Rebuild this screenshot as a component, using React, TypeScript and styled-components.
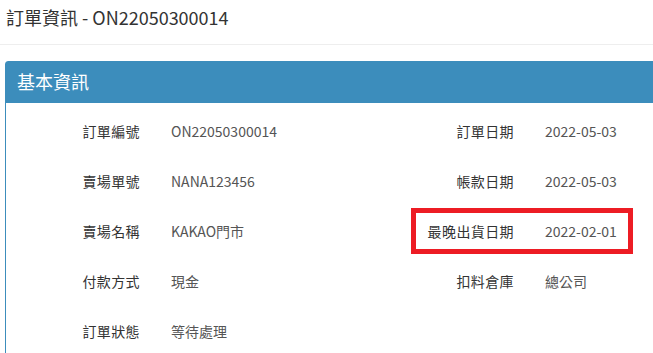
import React from "react";
import styled, { createGlobalStyle } from "styled-components";

const Global = createGlobalStyle`
  html, body { margin: 0; padding: 0; background: #fff; overflow: hidden; }
  body { font-family: "Noto Sans CJK TC", "Noto Sans", sans-serif; color: #333; }
`;

const Page = styled.div`
  width: 760px;
`;

const TitleBar = styled.div`
  height: 44px;
  border-bottom: 1px solid #eee;
  padding-left: 6px;
  display: flex;
  align-items: flex-start;
`;

const Title = styled.h1`
  margin: 5px 0 0;
  font-size: 18px;
  font-weight: 400;
  line-height: 24px;
  color: #333;
`;

const Panel = styled.section`
  margin: 16px 0 0 5px;
  border: 1px solid #3c8dbc;
  border-radius: 3px 3px 0 0;
  width: 750px;
`;

const PanelHeading = styled.div`
  background: #3c8dbc;
  color: #fff;
  height: 41px;
  padding: 0 0 0 11px;
  display: flex;
  align-items: center;
  font-size: 18px;
  line-height: 24px;
  padding-bottom: 4px;
  box-sizing: border-box;
`;

const PanelBody = styled.div`
  padding-top: 3px;
  display: grid;
  grid-template-columns: 374px 374px;
  align-items: start;
`;

const Column = styled.div`
  display: flex;
  flex-direction: column;
`;

const Field = styled.div`
  position: relative;
  height: 50px;
  display: grid;
  grid-template-columns: 134px 1fr;
  column-gap: 31px;
  align-items: center;
  font-size: 14px;
`;

const Label = styled.div`
  text-align: right;
  color: #333;
  letter-spacing: 0.4px;
`;

const Value = styled.div`
  color: #555;
`;

const Highlight = styled.div`
  position: absolute;
  left: 31px;
  top: 2px;
  width: 222px;
  height: 46px;
  border: 5px solid #ed1c24;
  box-sizing: border-box;
  pointer-events: none;
`;

type Item = { label: string; value: string; mark?: boolean };

const left: Item[] = [
  { label: "訂單編號", value: "ON22050300014" },
  { label: "賣場單號", value: "NANA123456" },
  { label: "賣場名稱", value: "KAKAO門市" },
  { label: "付款方式", value: "現金" },
  { label: "訂單狀態", value: "等待處理" },
];

const right: Item[] = [
  { label: "訂單日期", value: "2022-05-03" },
  { label: "帳款日期", value: "2022-05-03" },
  { label: "最晚出貨日期", value: "2022-02-01", mark: true },
  { label: "扣料倉庫", value: "總公司" },
];

const FieldList = ({ items }: { items: Item[] }) => (
  <Column>
    {items.map((it) => (
      <Field key={it.label}>
        <Label>{it.label}</Label>
        <Value>{it.value}</Value>
        {it.mark && <Highlight />}
      </Field>
    ))}
  </Column>
);

export default function App() {
  return (
    <Page>
      <Global />
      <TitleBar>
        <Title>訂單資訊 - ON22050300014</Title>
      </TitleBar>
      <Panel>
        <PanelHeading>基本資訊</PanelHeading>
        <PanelBody>
          <FieldList items={left} />
          <FieldList items={right} />
        </PanelBody>
      </Panel>
    </Page>
  );
}
